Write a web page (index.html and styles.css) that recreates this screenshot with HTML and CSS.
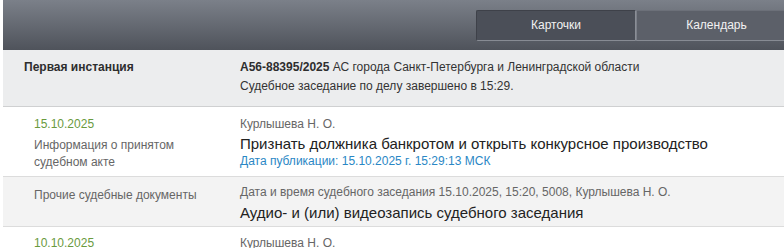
FILE: index.html
```html
<!DOCTYPE html>
<html lang="ru">
<head>
<meta charset="utf-8">
<link rel="stylesheet" href="styles.css">
</head>
<body>
<div class="page">
  <div class="topbar">
    <div class="tabs">
      <div class="tab active">Карточки</div>
      <div class="tab">Календарь</div>
    </div>
  </div>
  <div class="instance">
    <div class="inst-left">Первая инстанция</div>
    <div class="inst-right">
      <div><b>А56-88395/2025</b> АС города Санкт-Петербурга и Ленинградской области</div>
      <div>Судебное заседание по делу завершено в 15:29.</div>
    </div>
  </div>
  <div class="row first">
    <div class="left">
      <div class="date">15.10.2025</div>
      <div class="kind">Информация о принятом<br>судебном акте</div>
    </div>
    <div class="right">
      <div class="judge">Курлышева Н. О.</div>
      <div class="title">Признать должника банкротом и открыть конкурсное производство</div>
      <div class="pub">Дата публикации: 15.10.2025 г. 15:29:13 МСК</div>
    </div>
  </div>
  <div class="row gray">
    <div class="left">
      <div class="kind">Прочие судебные документы</div>
    </div>
    <div class="right">
      <div class="judge">Дата и время судебного заседания 15.10.2025, 15:20, 5008, Курлышева Н. О.</div>
      <div class="title">Аудио- и (или) видеозапись судебного заседания</div>
    </div>
  </div>
  <div class="row last">
    <div class="left">
      <div class="date">10.10.2025</div>
    </div>
    <div class="right">
      <div class="judge">Курлышева Н. О.</div>
    </div>
  </div>
</div>
</body>
</html>
```
FILE: styles.css
```css
html, body {
  margin: 0;
  padding: 0;
  background: #fff;
  overflow: hidden;
}
body {
  font-family: "Liberation Sans", Arial, sans-serif;
  font-size: 12px;
  color: #333;
}
.page {
  margin-left: 3px;
  width: 781px;
  overflow: hidden;
}
.topbar {
  height: 50px;
  background: linear-gradient(#7b8089, #4f535b);
  display: flex;
  padding-left: 473px;
  box-sizing: border-box;
}
.tabs {
  display: flex;
  margin-top: 10px;
  height: 31px;
  flex-shrink: 0;
}
.tab {
  width: 160px;
  flex-shrink: 0;
  box-sizing: border-box;
  background: #5c6069;
  border-top: 1px solid #6c7079;
  border-bottom: 1px solid #878b93;
  border-left: 1px solid #7b7f88;
  color: #f2f2f2;
  font-size: 12px;
  display: flex;
  align-items: center;
  justify-content: center;
  padding-bottom: 1px;
}
.tab.active {
  background: #4b4f58;
  border-color: #3e4149;
  border-bottom-color: #878b93;
  border-right: 1px solid #8a8e96;
  border-radius: 2px 0 0 2px;
}
.instance {
  display: flex;
  background: #ecedee;
  border-bottom: 1px solid #cfd0d1;
  height: 57px;
  box-sizing: border-box;
  padding-top: 8px;
  line-height: 19px;
}
.inst-left {
  width: 237px;
  padding-left: 21px;
  box-sizing: border-box;
  font-weight: bold;
  color: #2e2e2e;
}
.inst-right {
  color: #333;
}
.inst-right b {
  color: #2e2e2e;
}
.row {
  display: flex;
  border-bottom: 1px solid #dcdcdc;
  line-height: 17px;
}
.row.first {
  height: 70px;
  box-sizing: border-box;
  padding-top: 9px;
}
.row.gray {
  background: #f3f3f3;
  height: 50px;
  box-sizing: border-box;
  padding-top: 7px;
}
.row.last {
  border-bottom: none;
  padding-top: 8px;
}
.left {
  width: 237px;
  padding-left: 31px;
  box-sizing: border-box;
}
.gray .left {
  padding-top: 3px;
}
.date {
  color: #6a9a3e;
  margin-bottom: 4px;
}
.kind {
  color: #666;
}
.judge {
  color: #666;
}
.title {
  font-size: 15px;
  color: #222;
  line-height: 20px;
  margin-top: 1px;
}
.gray .title {
  margin-top: 2px;
}
.pub {
  color: #2a87c5;
  margin-top: -1px;
}
```
